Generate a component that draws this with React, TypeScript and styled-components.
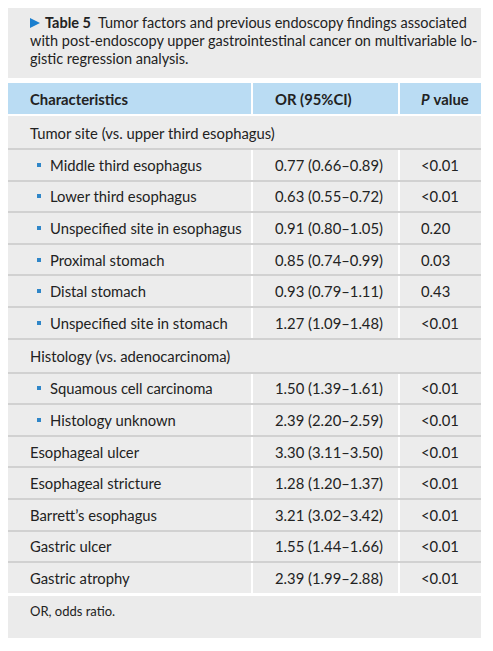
import React from "react";
import styled, { createGlobalStyle } from "styled-components";

const GlobalStyle = createGlobalStyle`
  body {
    margin: 8px;
    background: #ffffff;
    font-family: Lato, "Liberation Sans", sans-serif;
    color: #222222;
  }
`;

interface Row {
  label: string;
  or?: string;
  p?: string;
  bullet?: boolean;
  group?: boolean;
}

const rows: Row[] = [
  { label: "Tumor site (vs. upper third esophagus)", group: true },
  { label: "Middle third esophagus", or: "0.77 (0.66–0.89)", p: "<0.01", bullet: true },
  { label: "Lower third esophagus", or: "0.63 (0.55–0.72)", p: "<0.01", bullet: true },
  { label: "Unspecified site in esophagus", or: "0.91 (0.80–1.05)", p: "0.20", bullet: true },
  { label: "Proximal stomach", or: "0.85 (0.74–0.99)", p: "0.03", bullet: true },
  { label: "Distal stomach", or: "0.93 (0.79–1.11)", p: "0.43", bullet: true },
  { label: "Unspecified site in stomach", or: "1.27 (1.09–1.48)", p: "<0.01", bullet: true },
  { label: "Histology (vs. adenocarcinoma)", group: true },
  { label: "Squamous cell carcinoma", or: "1.50 (1.39–1.61)", p: "<0.01", bullet: true },
  { label: "Histology unknown", or: "2.39 (2.20–2.59)", p: "<0.01", bullet: true },
  { label: "Esophageal ulcer", or: "3.30 (3.11–3.50)", p: "<0.01" },
  { label: "Esophageal stricture", or: "1.28 (1.20–1.37)", p: "<0.01" },
  { label: "Barrett’s esophagus", or: "3.21 (3.02–3.42)", p: "<0.01" },
  { label: "Gastric ulcer", or: "1.55 (1.44–1.66)", p: "<0.01" },
  { label: "Gastric atrophy", or: "2.39 (1.99–2.88)", p: "<0.01" },
];

export default function App() {
  return (
    <>
      <GlobalStyle />
      <Panel>
        <Caption>
          <Arrow viewBox="0 0 10 10">
            <path d="M0 0 L10 5 L0 10 Z" fill="#1b7fcf" />
          </Arrow>
          <strong>Table 5</strong>&nbsp; Tumor factors and previous endoscopy findings associated
          <br />
          with post-endoscopy upper gastrointestinal cancer on multivariable lo-
          <br />
          gistic regression analysis.
        </Caption>
        <HeadRow>
          <HeadCell>Characteristics</HeadCell>
          <HeadCell>OR (95%CI)</HeadCell>
          <HeadCell>
            <em>P</em> value
          </HeadCell>
        </HeadRow>
        <Body>
          {rows.map((r, i) =>
            r.group ? (
              <BodyRow key={i} first={i === 0}>
                <GroupCell>{r.label}</GroupCell>
              </BodyRow>
            ) : (
              <BodyRow key={i} first={i === 0}>
                <Cell bullet={r.bullet}>
                  {r.bullet && <Bullet />}
                  {r.label}
                </Cell>
                <Cell>{r.or}</Cell>
                <Cell>{r.p}</Cell>
              </BodyRow>
            )
          )}
        </Body>
        <Footer>OR, odds ratio.</Footer>
      </Panel>
    </>
  );
}

const Panel = styled.div`
  width: 473px;
  display: flex;
  flex-direction: column;
`;

const Caption = styled.div`
  background: #ebebeb;
  padding: 6px 4px 10px 22px;
  font-size: 14.5px;
  line-height: 18px;
  white-space: nowrap;
  color: #222;
  strong {
    font-weight: 700;
  }
`;

const Arrow = styled.svg`
  width: 10px;
  height: 10px;
  margin-right: 5px;
  vertical-align: 0px;
`;

const HeadRow = styled.div`
  margin-top: 5px;
  display: grid;
  grid-template-columns: 243px 145px 81px;
  column-gap: 2px;
  background: #fff;
`;

const HeadCell = styled.div`
  background: #badcf3;
  height: 31px;
  display: flex;
  align-items: center;
  padding-left: 22px;
  font-size: 14.8px;
  font-weight: 700;
  color: #222;
  em {
    font-style: italic;
    margin-right: 4px;
  }
  &:nth-child(3) {
    padding-left: 21px;
  }
`;

const Body = styled.div`
  margin-top: 2px;
  display: flex;
  flex-direction: column;
`;

const BodyRow = styled.div<{ first?: boolean }>`
  display: grid;
  grid-template-columns: 243px 145px 81px;
  column-gap: 2px;
  background: #fff;
  border-top: ${({ first }) => (first ? "none" : "2px solid #d1d1d1")};
`;

const Cell = styled.div<{ bullet?: boolean }>`
  background: #ececec;
  height: 29.6px;
  display: flex;
  align-items: center;
  padding-left: ${({ bullet }) => (bullet ? "29px" : "22px")};
  font-size: 14.8px;
  color: #222;
  &:nth-child(3) {
    padding-left: 21px;
  }
`;

const GroupCell = styled.div`
  grid-column: 1 / -1;
  background: #ececec;
  height: 32px;
  padding-top: 1px;
  box-sizing: border-box;
  display: flex;
  align-items: center;
  padding-left: 22px;
  font-size: 14.8px;
  color: #222;
`;

const Bullet = styled.span`
  width: 4px;
  height: 4px;
  background: #2f86c8;
  margin-right: 9px;
`;

const Footer = styled.div`
  margin-top: 3px;
  background: #ebebeb;
  height: 42px;
  padding: 7px 22px 0;
  box-sizing: border-box;
  font-size: 13px;
  color: #222;
`;
